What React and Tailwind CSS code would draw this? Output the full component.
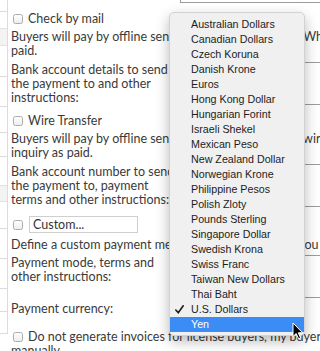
import React from 'react';

const currencies = [
    "Australian Dollars", "Canadian Dollars", "Czech Koruna", "Danish Krone", "Euros",
    "Hong Kong Dollar", "Hungarian Forint", "Israeli Shekel", "Mexican Peso", "New Zealand Dollar",
    "Norwegian Krone", "Philippine Pesos", "Polish Zloty", "Pounds Sterling", "Singapore Dollar",
    "Swedish Krona", "Swiss Franc", "Taiwan New Dollars", "Thai Baht", "U.S. Dollars", "Yen",
];

const Checkbox = () => (
    <span className="inline-block w-[10px] h-[10px] rounded-[2.5px] border border-[#ababab] bg-gradient-to-b from-white to-[#ededed] shrink-0" />
);

const FieldBox = ({ className = "" }) => (
    <div className={`flex-1 border border-r-0 border-[#9c9c9c] bg-white ${className}`} />
);

const App = () => {
    const font = { fontFamily: 'Lato, "Open Sans", sans-serif' };

    return (
        <div className="relative w-[320px] h-[351px] overflow-hidden bg-white flex" style={font}>
            {/* left strip */}
            <div className="w-[8px] shrink-0 border-r border-[#dcdcdc] flex flex-col h-[334px] border-b">
                <div className="h-[12px] border-b border-[#dcdcdc]" />
                <div className="h-[16px]" />
                <div className="h-[18px] bg-[#f3f3f3] border-y border-[#e2e2e2]" />
                <div className="h-[31px] border-b border-[#dcdcdc]" />
                <div className="h-[30px] border-b border-[#dcdcdc]" />
                <div className="h-[26px] border-b border-[#dcdcdc]" />
                <div className="h-[24px] border-b border-[#dcdcdc]" />
                <div className="h-[28px]" />
                <div className="h-[17px] bg-[#f3f3f3] border-y border-[#e2e2e2]" />
                <div className="h-[27px] border-b border-[#dcdcdc]" />
                <div className="h-[30px] border-b border-[#dcdcdc]" />
                <div className="h-[30px] border-b border-[#dcdcdc]" />
                <div className="h-[23px] border-b border-[#dcdcdc]" />
            </div>

            {/* form */}
            <div className="w-[640px] shrink-0 pl-[3px] text-[12.5px] leading-[14px] text-[#3a3a3a]">
                <div className="flex">
                    <div className="w-[169px] shrink-0" />
                    <FieldBox className="h-[3px] border-t-0" />
                </div>

                <label className="mt-[9px] flex items-center gap-[5px] h-[14px] pl-[2px]">
                    <Checkbox />
                    <span>Check by mail</span>
                </label>
                <p className="mt-[4px] whitespace-nowrap">
                    Buyers will pay by offline sending a check in the mail. When you receive it, mark the<br />
                    paid.
                </p>
                <div className="mt-[4px] flex">
                    <div className="w-[169px] shrink-0 pt-[1px]">
                        Bank account details to send<br />the payment to and other<br />instructions:
                    </div>
                    <FieldBox className="h-[43px]" />
                </div>

                <label className="mt-[9px] flex items-center gap-[5px] h-[14px] pl-[2px]">
                    <Checkbox />
                    <span>Wire Transfer</span>
                </label>
                <p className="mt-[4px] whitespace-nowrap">
                    Buyers will pay by offline sending their payment via a wire transfer. When you receive it, mark the<br />
                    inquiry as paid.
                </p>
                <div className="mt-[4px] flex">
                    <div className="w-[169px] shrink-0 pt-[1px]">
                        Bank account number to send<br />the payment to, payment<br />terms and other instructions:
                    </div>
                    <FieldBox className="h-[43px]" />
                </div>

                <div className="mt-[9px] flex items-center gap-[6px] h-[17px] pl-[2px]">
                    <Checkbox />
                    <div className="w-[109px] h-[17px] border border-[#cfcfcf] px-[3px] flex items-center text-[#333]">
                        Custom...
                    </div>
                </div>
                <p className="mt-[5px] whitespace-nowrap">
                    Define a custom payment method – whichever suits you and your buyers best.
                </p>
                <div className="mt-[3px] flex">
                    <div className="w-[169px] shrink-0 pt-[1px]">
                        Payment mode, terms and<br />other instructions:
                    </div>
                    <FieldBox className="h-[43px]" />
                </div>

                <div className="mt-[4px] flex items-center h-[14px]">
                    <div className="w-[169px] shrink-0">Payment currency:</div>
                    <div className="w-[120px] h-[18px] border border-[#b9b9b9] rounded-[4px]" />
                </div>

                <label className="mt-[14px] flex items-center gap-[5px] h-[14px] pl-[2px]">
                    <Checkbox />
                    <span className="whitespace-nowrap">Do not generate invoices for license buyers, my buyers will be invoiced</span>
                </label>
                <p className="whitespace-nowrap">manually.</p>
            </div>

            {/* currency dropdown */}
            <div
                className="absolute left-[169px] top-[12px] w-[136px] pt-[4px] pb-[3px] bg-[#f0f0f0] rounded-[5px] border border-[#d2d2d2] shadow-[0_5px_14px_rgba(0,0,0,0.28)] text-[10.7px] text-[#1c1c1c]"
                style={{ fontFamily: '"Liberation Sans", Arial, sans-serif' }}
            >
                {currencies.map((c) => (
                    <div
                        key={c}
                        className={`relative h-[15px] leading-[15px] pl-[21px] ${c === "Yen" ? "bg-[#3b8cf5] text-white" : ""}`}
                    >
                        {c === "U.S. Dollars" && (
                            <svg className="absolute left-[5px] top-[3px]" width="9" height="9" viewBox="0 0 9 9">
                                <path d="M0.8 5 L3.3 7.8 L8.2 0.8" fill="none" stroke="#1c1c1c" strokeWidth="1.6" strokeLinecap="round" strokeLinejoin="round" />
                            </svg>
                        )}
                        {c}
                    </div>
                ))}
            </div>

            {/* mouse pointer */}
            <svg className="absolute left-[292px] top-[322px]" width="12" height="18" viewBox="0 0 12 18">
                <path d="M1 1 L1 14.5 L4.2 11.5 L6.6 16.8 L8.6 15.9 L6.3 10.8 L10.6 10.8 Z" fill="#000" stroke="#fff" strokeWidth="1" strokeLinejoin="round" />
            </svg>
        </div>
    );
};

export default App;
